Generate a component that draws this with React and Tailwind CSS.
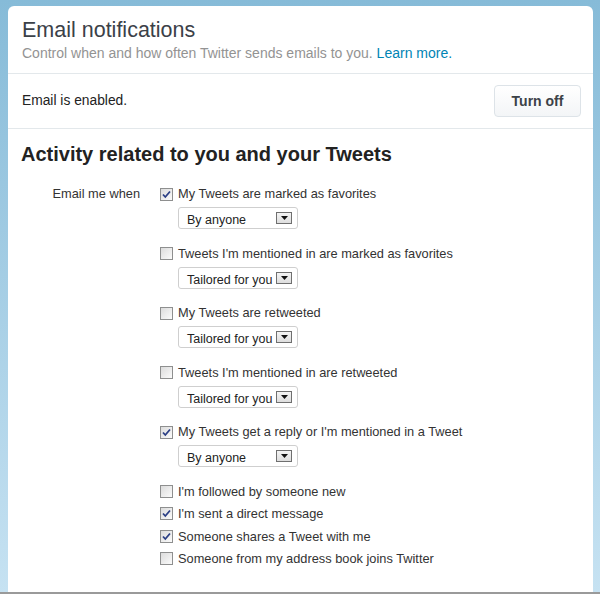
const font = { fontFamily: '"Liberation Sans", Arial, sans-serif' };

const Checkbox = ({ checked }) => (
  <span className="flex h-[13px] w-[13px] shrink-0 items-center justify-center border border-[#8e8f8f] bg-gradient-to-br from-[#dcdcdc] to-[#fbfbfb]">
    {checked && (
      <svg width="9" height="9" viewBox="0 0 9 9">
        <path d="M1 4.5 L3.3 7 L8 1.5" fill="none" stroke="#2b3f85" strokeWidth="1.8" />
      </svg>
    )}
  </span>
);

const Select = ({ value }) => (
  <div className="ml-[18px] mt-[2px] flex h-[22px] w-[120px] items-center justify-between rounded-[3px] border border-[#cfcfcf] bg-white pl-[8px] pr-[5px]">
    <span className="whitespace-nowrap pt-[4px] text-[12.5px] leading-[18px] text-[#222]">{value}</span>
    <span className="flex h-[12px] w-[16px] shrink-0 items-center justify-center border border-[#6f6f6f] bg-gradient-to-b from-[#f4f4f4] to-[#dedede]">
      <svg width="7" height="4" viewBox="0 0 7 4">
        <path d="M0 0 H7 L3.5 4 Z" fill="#111" />
      </svg>
    </span>
  </div>
);

const Option = ({ checked, label }) => (
  <div className="flex h-[22px] items-center gap-[5px]">
    <Checkbox checked={checked} />
    <span className="text-[12.8px] text-[#333]">{label}</span>
  </div>
);

const groups = [
  { checked: true, label: "My Tweets are marked as favorites", value: "By anyone" },
  { checked: false, label: "Tweets I'm mentioned in are marked as favorites", value: "Tailored for you" },
  { checked: false, label: "My Tweets are retweeted", value: "Tailored for you" },
  { checked: false, label: "Tweets I'm mentioned in are retweeted", value: "Tailored for you" },
  { checked: true, label: "My Tweets get a reply or I'm mentioned in a Tweet", value: "By anyone" },
];

const simple = [
  { checked: false, label: "I'm followed by someone new" },
  { checked: true, label: "I'm sent a direct message" },
  { checked: true, label: "Someone shares a Tweet with me" },
  { checked: false, label: "Someone from my address book joins Twitter" },
];

const App = () => {
  return (
    <div
      style={font}
      className="h-[594px] w-[600px] overflow-hidden border-b-2 border-[#9a9a9a] bg-gradient-to-b from-[#86bbd8] to-[#c6e2f2] pl-[8px] pr-[7px] pt-[6px]"
    >
      <div className="h-[600px] rounded-t-[6px] bg-white">
        {/* Header */}
        <div className="border-b border-[#e3e8eb] px-[14px] pb-[11px] pt-[11px]">
          <h1 className="text-[21.5px] leading-[26px] text-[#3b4148]">Email notifications</h1>
          <p className="mt-[1px] text-[14px] leading-[18px] text-[#939393]">
            Control when and how often Twitter sends emails to you.{" "}
            <span className="text-[#0084b4]">Learn more.</span>
          </p>
        </div>

        {/* Status */}
        <div className="flex h-[55px] items-center justify-between border-b border-[#e3e8eb] pl-[14px] pr-[12px]">
          <span className="text-[13.8px] text-[#222]">Email is enabled.</span>
          <button className="h-[32px] w-[87px] rounded-[4px] border border-[#dde3e8] bg-gradient-to-b from-white to-[#f3f5f7] text-[14px] font-bold text-[#3c4248]">
            Turn off
          </button>
        </div>

        {/* Activity */}
        <div className="px-[13px] pt-[13px]">
          <h2 className="text-[20px] font-bold leading-[24px] text-[#222]">
            Activity related to you and your Tweets
          </h2>

          <div className="mt-[17px] flex">
            <div className="w-[119px] text-right text-[12.8px] leading-[22px] text-[#333]">
              Email me when
            </div>

            <div className="ml-[20px]">
              {groups.map((g) => (
                <div key={g.label} className="mb-[13.5px]">
                  <Option checked={g.checked} label={g.label} />
                  <Select value={g.value} />
                </div>
              ))}

              <div className="mt-[1px]">
                {simple.map((s) => (
                  <div key={s.label} className="h-[22.4px]">
                    <Option checked={s.checked} label={s.label} />
                  </div>
                ))}
              </div>
            </div>
          </div>
        </div>
      </div>
    </div>
  );
};

export default App;
